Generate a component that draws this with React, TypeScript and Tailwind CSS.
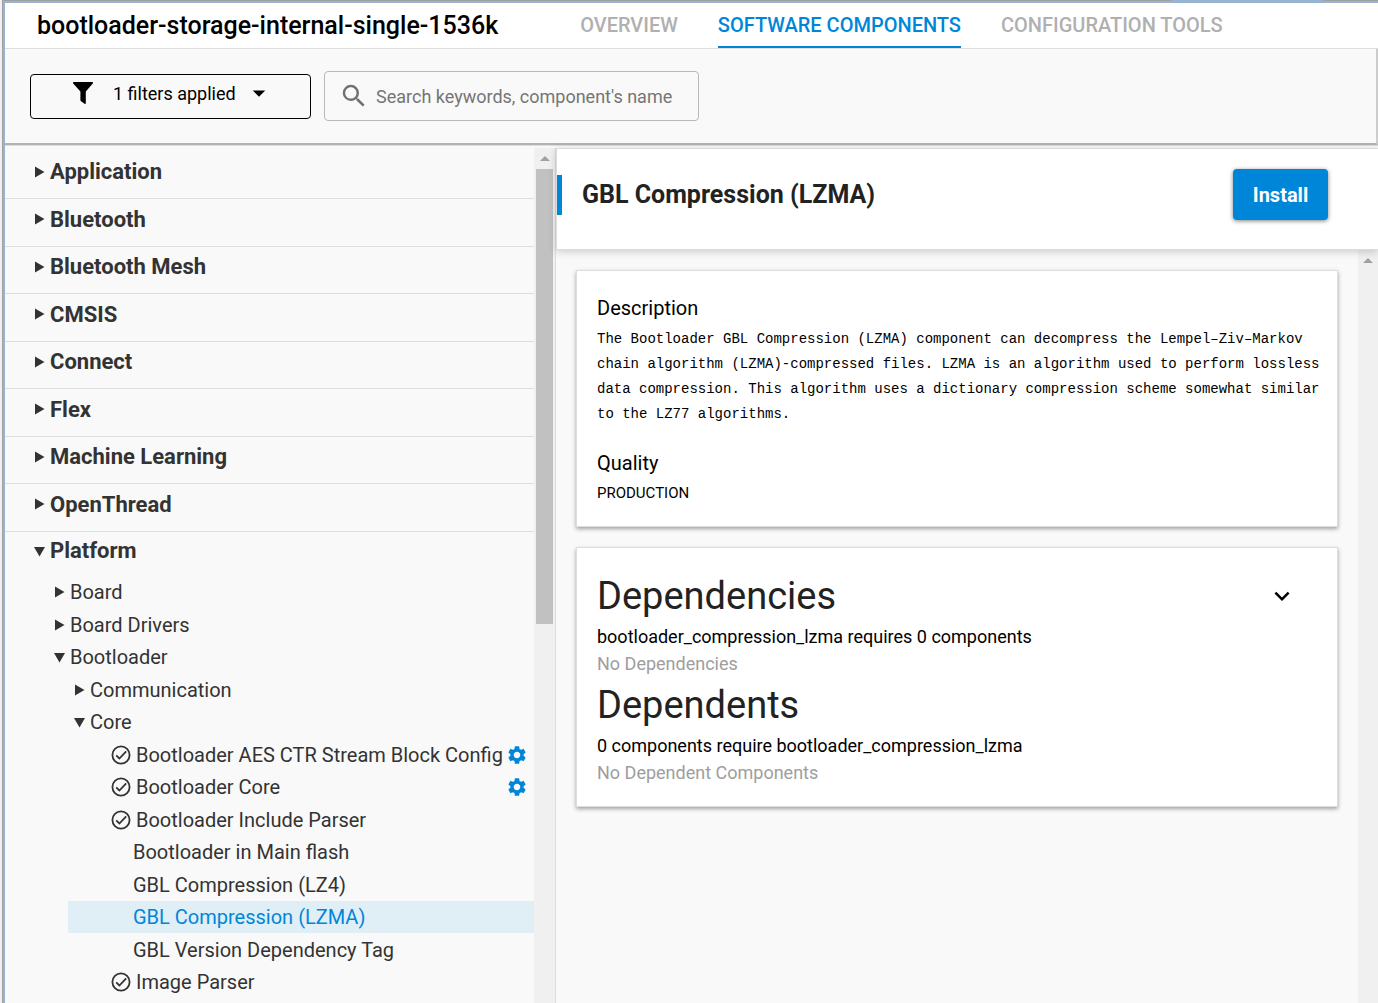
import { useState } from "react";
import { MdArrowDropDown, MdExpandMore, MdSearch, MdSettings } from "react-icons/md";

const TABS = ["Overview", "Software Components", "Configuration Tools"];

const CATEGORIES = [
  "Application",
  "Bluetooth",
  "Bluetooth Mesh",
  "CMSIS",
  "Connect",
  "Flex",
  "Machine Learning",
  "OpenThread",
];

type Node = {
  label: string;
  kind: "closed" | "open" | "installed" | "available";
  indent: string;
  level: number;
  configurable?: boolean;
};

const PLATFORM: Node[] = [
  { label: "Board", kind: "closed", indent: "pl-[49px]", level: 2 },
  { label: "Board Drivers", kind: "closed", indent: "pl-[49px]", level: 2 },
  { label: "Bootloader", kind: "open", indent: "pl-[49px]", level: 2 },
  { label: "Communication", kind: "closed", indent: "pl-[69px]", level: 3 },
  { label: "Core", kind: "open", indent: "pl-[69px]", level: 3 },
  { label: "Bootloader AES CTR Stream Block Config", kind: "installed", indent: "pl-[43px]", level: 4, configurable: true },
  { label: "Bootloader Core", kind: "installed", indent: "pl-[43px]", level: 4, configurable: true },
  { label: "Bootloader Include Parser", kind: "installed", indent: "pl-[43px]", level: 4 },
  { label: "Bootloader in Main flash", kind: "available", indent: "pl-[65px]", level: 4 },
  { label: "GBL Compression (LZ4)", kind: "available", indent: "pl-[65px]", level: 4 },
  { label: "GBL Compression (LZMA)", kind: "available", indent: "pl-[65px]", level: 4 },
  { label: "GBL Version Dependency Tag", kind: "available", indent: "pl-[65px]", level: 4 },
  { label: "Image Parser", kind: "installed", indent: "pl-[43px]", level: 4 },
];

function Triangle({ open }: { open?: boolean }) {
  return (
    <svg viewBox="0 0 12 12" className="size-3 shrink-0" fill="#333" aria-hidden="true">
      <path d={open ? "M0 2H11L5.5 11.5Z" : "M1 0.5V11.5L10.5 6Z"} />
    </svg>
  );
}

function FilterIcon() {
  return (
    <svg viewBox="0 0 20 22" className="h-[22px] w-5 shrink-0" fill="currentColor" aria-hidden="true">
      <path d="M0.6 0H19.4C20 0 20.2 0.9 19.8 1.4L12.8 9.4V21.2C12.8 21.9 12.2 22.2 11.6 21.8L8 19.2C7.6 18.9 7.4 18.6 7.4 18.1V9.4L0.2 1.4C-0.2 0.9 0 0 0.6 0Z" />
    </svg>
  );
}

function InstalledIcon() {
  return (
    <svg viewBox="0 0 20 20" className="size-5 shrink-0" fill="none" stroke="#333" strokeWidth="1.8" aria-hidden="true">
      <circle cx="10" cy="10" r="8.6" />
      <path d="M5.2 10.4l3.2 3.1 6.8-7.2" />
    </svg>
  );
}

function UpArrow() {
  return (
    <svg viewBox="0 0 10 5" className="h-[5px] w-2.5" fill="#a0a0a0" aria-hidden="true">
      <path d="M0 5L5 0l5 5z" />
    </svg>
  );
}

function TreeRow({ node, selected, onSelect }: { node: Node; selected: boolean; onSelect: () => void }) {
  const leaf = node.kind === "installed" || node.kind === "available";
  return (
    <li
      role="treeitem"
      aria-level={node.level}
      aria-selected={selected}
      className={`flex items-center pr-1.5 odd:h-8 even:h-[33px] ${leaf ? "ml-[63px]" : ""} ${selected ? "bg-[#e0eef6]" : ""}`}
    >
      <button
        type="button"
        onClick={leaf ? onSelect : undefined}
        className={`flex min-w-0 flex-1 items-center whitespace-nowrap text-left text-[20px] leading-8 ${node.indent} ${
          node.kind === "installed" ? "gap-[5px]" : "gap-1"
        } ${selected ? "text-[#0086d9]" : "text-[#333]"}`}
      >
        {node.kind === "closed" && <Triangle />}
        {node.kind === "open" && <Triangle open />}
        {node.kind === "installed" && <InstalledIcon />}
        {node.label}
      </button>
      {node.configurable && (
        <button type="button" aria-label={`Configure ${node.label}`}>
          <MdSettings className="size-[22px] text-[#0086d9]" />
        </button>
      )}
    </li>
  );
}

export default function App() {
  const [selected, setSelected] = useState("GBL Compression (LZMA)");

  return (
    <div className="flex h-screen flex-col overflow-hidden bg-[#f0f0f0] pl-0.5 font-[Roboto,sans-serif]">
      <div className="flex h-px shrink-0 bg-[#a0a0a0]">
        <div className="ml-[85%] w-[11%] bg-[#99b4d1]" />
      </div>
      <div className="flex min-h-0 flex-1 border-l border-[#a0a0a0]">
        <div className="flex min-w-0 flex-1 flex-col border-t-2 border-l-2 border-[#99b4d1] bg-[#f9f9f9]">
          <header className="flex h-[46px] shrink-0 border-b border-[#ddd] bg-white pl-8">
            <h1 className="text-[25px] leading-[45px] font-medium whitespace-nowrap text-black">
              bootloader-storage-internal-single-1536k
            </h1>
            <nav className="ml-[82px] flex gap-10">
              {TABS.map((tab, i) => (
                <a
                  key={tab}
                  href="#"
                  aria-current={i === 1 ? "page" : undefined}
                  className={`border-b-2 text-[20px] leading-[45px] font-medium whitespace-nowrap uppercase ${
                    i === 1 ? "border-[#0086d9] text-[#0086d9]" : "border-transparent text-[#b0b0b0]"
                  }`}
                >
                  {tab}
                </a>
              ))}
            </nav>
          </header>

          <div className="flex h-24 shrink-0 items-center gap-[13px] border-r-2 border-b-2 border-r-[#ccc] border-b-[#b2b2b2] pl-[25px]">
            <button
              type="button"
              className="flex h-[45px] w-[281px] items-center rounded border border-black pb-1.5 pl-[42px] text-[18px] text-black"
            >
              <FilterIcon />
              <span className="ml-5">1 filters applied</span>
              <MdArrowDropDown className="ml-2 size-[30px]" />
            </button>
            <label className="flex h-[50px] w-[375px] items-center gap-[7px] rounded border border-[#b8b8b8] pl-3.5">
              <MdSearch className="size-[30px] shrink-0 text-[#707070]" />
              <input
                type="search"
                aria-label="Search components"
                placeholder="Search keywords, component's name"
                className="min-w-0 flex-1 bg-transparent text-[18px] outline-none placeholder:text-[#757575]"
              />
            </label>
          </div>
          <div className="h-px shrink-0 bg-[#ddd]" />

          <div className="flex min-h-0 flex-1 pt-0.5">
            <aside className="flex w-[551px] shrink-0 border-r border-[#ddd]">
              <ul role="tree" className="min-w-0 flex-1 overflow-hidden pt-1">
                {CATEGORIES.map((name) => (
                  <li
                    key={name}
                    role="treeitem"
                    aria-level={1}
                    aria-selected={false}
                    className="border-b border-[#ddd] odd:h-[47px] even:h-12"
                  >
                    <button
                      type="button"
                      className="flex h-full items-center gap-1 pb-[7px] pl-[29px] text-[22px] font-bold text-[#333]"
                    >
                      <Triangle />
                      {name}
                    </button>
                  </li>
                ))}
                <li role="treeitem" aria-level={1} aria-selected={false} aria-expanded="true">
                  <button
                    type="button"
                    className="flex h-11 items-center gap-1 pb-[7px] pl-[29px] text-[22px] font-bold text-[#333]"
                  >
                    <Triangle open />
                    Platform
                  </button>
                  <ul role="group">
                    {PLATFORM.map((node) => (
                      <TreeRow
                        key={node.label}
                        node={node}
                        selected={node.label === selected}
                        onSelect={() => setSelected(node.label)}
                      />
                    ))}
                  </ul>
                </li>
              </ul>
              <div className="flex w-[21px] shrink-0 flex-col items-center bg-[#f0f0f0]" aria-hidden="true">
                <div className="flex h-[21px] w-full shrink-0 items-center justify-center">
                  <UpArrow />
                </div>
                <div className="h-[455px] w-[17px] bg-[#c1c1c1]" />
              </div>
            </aside>

            <main className="flex min-w-0 flex-1 flex-col">
              <div className="relative flex h-[102px] shrink-0 items-start justify-between border-t border-b border-l border-[#ddd] bg-white pt-5 pr-[50px] shadow-[0_2px_8px_rgba(0,0,0,0.18)]">
                <h2 className="mt-1.5 border-l-[5px] border-[#0086d9] pl-5 text-[25px] leading-10 font-bold text-[#222]">
                  GBL Compression (LZMA)
                </h2>
                <button
                  type="button"
                  className="h-[51px] w-[95px] rounded bg-[#0086d9] text-[20px] font-bold text-white shadow-[0_1px_4px_rgba(0,0,0,0.5)]"
                >
                  Install
                </button>
              </div>

              <div className="flex min-h-0 flex-1">
                <div className="flex min-w-0 flex-1 flex-col gap-5 p-5">
                  <section className="border border-[#ddd] bg-white pt-[25px] pr-2 pb-5 pl-5 shadow-[0_2px_4px_rgba(0,0,0,0.35)]">
                    <h3 className="text-[20px] leading-[25px] text-black">Description</h3>
                    <p className="mt-1.5 font-['Liberation_Mono',monospace] text-[14px] leading-[25px] text-black">
                      The Bootloader GBL Compression (LZMA) component can decompress the Lempel–Ziv–Markov chain
                      algorithm (LZMA)-compressed files. LZMA is an algorithm used to perform lossless data
                      compression. This algorithm uses a dictionary compression scheme somewhat similar to the LZ77
                      algorithms.
                    </p>
                    <h3 className="mt-6 text-[20px] leading-[25px] text-black">Quality</h3>
                    <p className="mt-[5px] text-[15px] leading-[25px] text-black">PRODUCTION</p>
                  </section>

                  <section className="border border-[#ddd] bg-white pt-[23px] pr-10 pb-5 pl-5 shadow-[0_2px_4px_rgba(0,0,0,0.35)]">
                    <div className="flex items-center justify-between">
                      <h2 className="text-[38px] leading-[50px] text-[#222]">Dependencies</h2>
                      <button type="button" aria-label="Collapse dependencies">
                        <MdExpandMore className="size-[30px] text-black" />
                      </button>
                    </div>
                    <p className="mt-0.5 text-[18px] leading-[27px] text-black">
                      bootloader_compression_lzma requires 0 components
                    </p>
                    <p className="text-[18px] leading-[27px] text-[#9e9e9e]">No Dependencies</p>
                    <h2 className="mt-[3px] text-[38px] leading-[50px] text-[#222]">Dependents</h2>
                    <p className="mt-0.5 text-[18px] leading-[27px] text-black">
                      0 components require bootloader_compression_lzma
                    </p>
                    <p className="text-[18px] leading-[27px] text-[#9e9e9e]">No Dependent Components</p>
                  </section>
                </div>
                <div className="flex w-5 shrink-0 justify-center bg-[#f0f0f0] pt-2" aria-hidden="true">
                  <UpArrow />
                </div>
              </div>
            </main>
          </div>
        </div>
      </div>
    </div>
  );
}
